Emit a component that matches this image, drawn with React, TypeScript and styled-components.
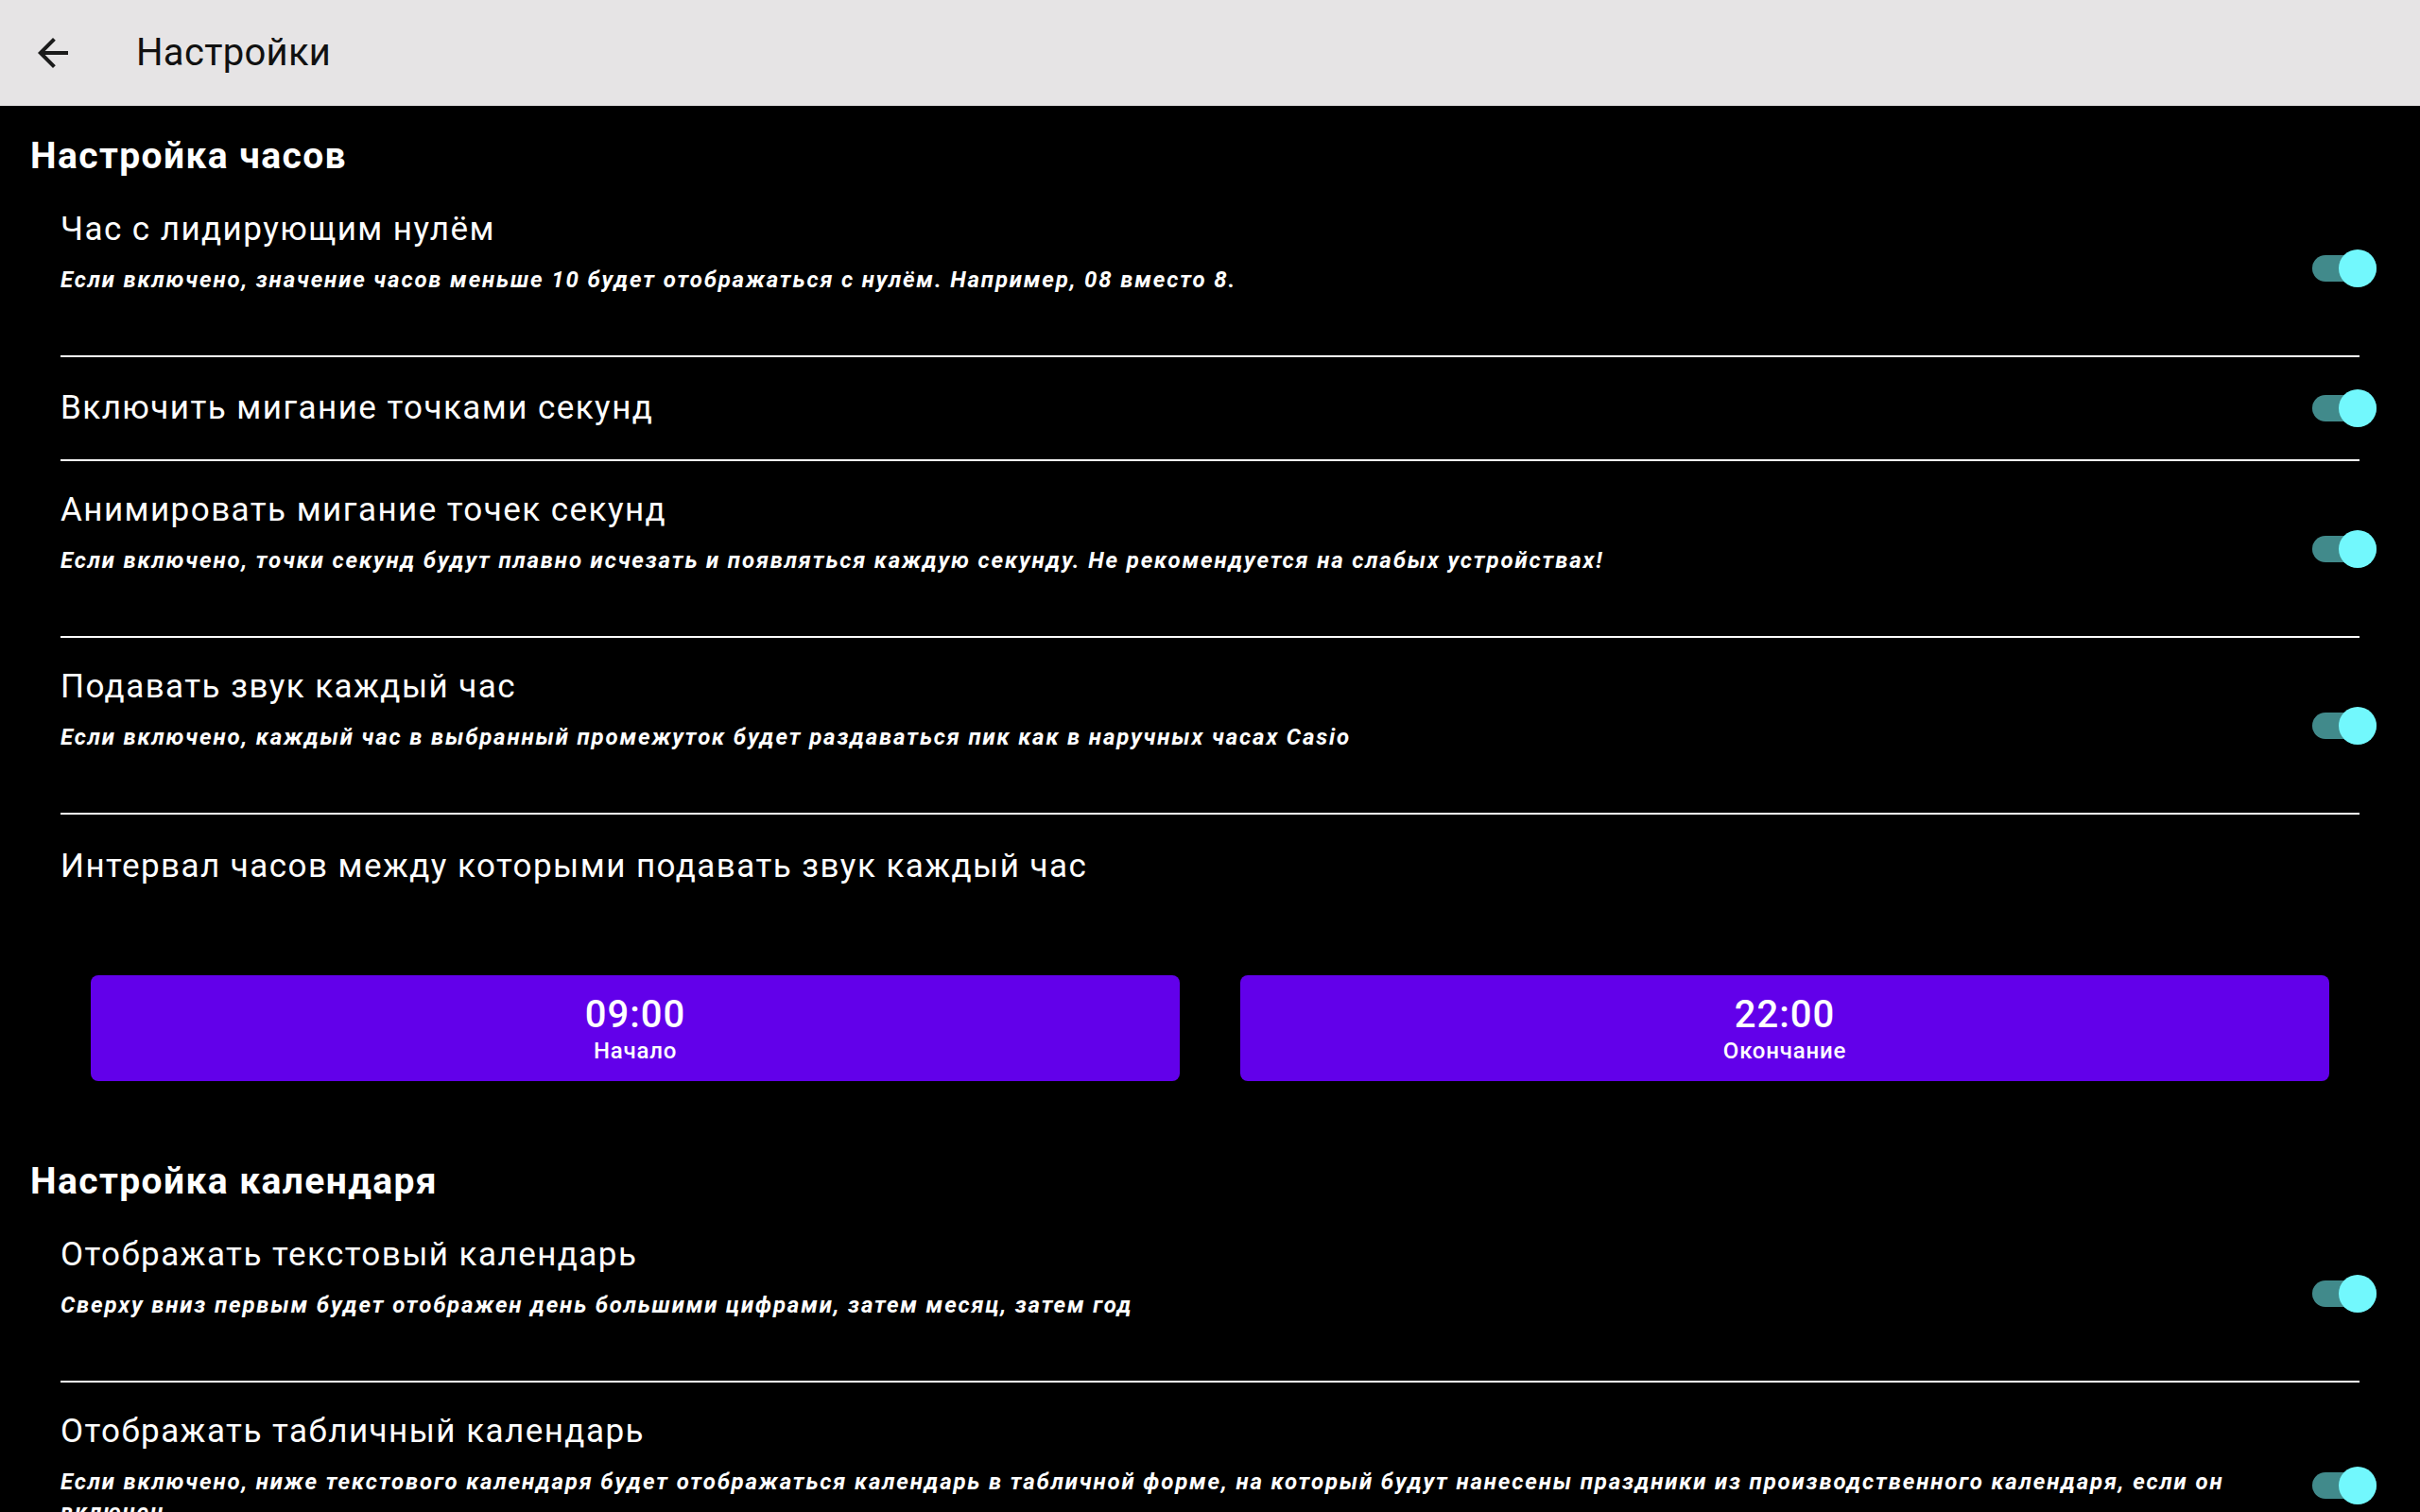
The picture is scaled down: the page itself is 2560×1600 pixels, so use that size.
import React from 'react'
import styled, { createGlobalStyle } from 'styled-components'

const GlobalStyle = createGlobalStyle`
  html, body {
    margin: 0;
    padding: 0;
    background: #000000;
  }
  body {
    font-family: 'Roboto', 'Noto Sans', sans-serif;
    -webkit-font-smoothing: antialiased;
  }
  * {
    box-sizing: border-box;
  }
`

const Screen = styled.div`
  width: 2560px;
  height: 1600px;
  overflow: hidden;
  background: #000000;
  display: flex;
  flex-direction: column;
`

const Toolbar = styled.header`
  height: 112px;
  flex-shrink: 0;
  background: #e6e4e5;
  display: flex;
  align-items: center;
  padding-left: 32px;
  gap: 64px;
`

const BackButton = styled.div`
  width: 48px;
  height: 48px;
  display: flex;
  align-items: center;
  justify-content: center;
  svg {
    width: 48px;
    height: 48px;
    fill: #1b1b1b;
  }
`

const ToolbarTitle = styled.h1`
  margin: 0;
  font-family: 'Roboto', sans-serif;
  font-weight: 400;
  font-size: 40px;
  line-height: 48px;
  color: #111111;
  letter-spacing: 0.3px;
`

const Content = styled.main`
  display: flex;
  flex-direction: column;
`

const SectionTitle = styled.h2<{ $top: number }>`
  margin: ${p => p.$top}px 0 2px;
  padding: 0 32px;
  font-family: 'Roboto', sans-serif;
  font-weight: 700;
  font-size: 39px;
  line-height: 48px;
  color: #ffffff;
  letter-spacing: 1.4px;
`

const Item = styled.div<{ $single?: boolean }>`
  display: flex;
  align-items: center;
  padding: ${p => (p.$single ? '34px 46px 34px 64px' : '32px 46px 32px 64px')};
`

const ItemText = styled.div<{ $single?: boolean }>`
  flex: 1;
  display: flex;
  flex-direction: column;
  gap: 17px;
  padding-right: 60px;
  padding-bottom: ${p => (p.$single ? '0' : '32px')};
`

const ItemTitle = styled.div`
  font-family: 'Roboto', sans-serif;
  font-weight: 400;
  font-size: 35px;
  line-height: 40px;
  color: #ffffff;
  letter-spacing: 1.45px;
`

const ItemSummary = styled.div`
  font-family: 'Roboto', sans-serif;
  font-weight: 700;
  font-style: italic;
  font-size: 24px;
  line-height: 32px;
  color: #ffffff;
  letter-spacing: 1.85px;
`

const Divider = styled.div`
  height: 2px;
  margin: 0 64px;
  background: #ffffff;
`

const SwitchTrack = styled.div<{ $on: boolean }>`
  position: relative;
  width: 68px;
  height: 28px;
  border-radius: 14px;
  flex-shrink: 0;
  background: ${p => (p.$on ? '#418a8b' : '#5b5b5b')};
`

const SwitchThumb = styled.div<{ $on: boolean }>`
  position: absolute;
  top: -6px;
  ${p => (p.$on ? 'right: 0;' : 'left: 0;')}
  width: 40px;
  height: 40px;
  border-radius: 50%;
  background: ${p => (p.$on ? '#72f8fd' : '#ececec')};
`

const IntervalBlock = styled.div`
  padding: 35px 0 0;
`

const IntervalTitle = styled.div`
  padding: 0 64px;
  font-family: 'Roboto', sans-serif;
  font-weight: 400;
  font-size: 35px;
  line-height: 40px;
  color: #ffffff;
  letter-spacing: 1.45px;
`

const ButtonRow = styled.div`
  display: grid;
  grid-template-columns: 1fr 1fr;
  gap: 64px;
  padding: 0 96px;
  margin-top: 95px;
`

const TimeButton = styled.button`
  height: 112px;
  border: none;
  border-radius: 8px;
  background: #6200ea;
  color: #ffffff;
  display: flex;
  flex-direction: column;
  align-items: center;
  justify-content: center;
  padding: 3px 0 0;
  cursor: pointer;
`

const TimeValue = styled.span`
  font-family: 'Roboto', sans-serif;
  font-weight: 500;
  font-size: 40px;
  line-height: 44px;
  letter-spacing: 1px;
`

const TimeLabel = styled.span`
  font-family: 'Roboto', sans-serif;
  font-weight: 500;
  font-size: 24px;
  line-height: 32px;
  letter-spacing: 0.8px;
`

type Setting = { title: string; summary?: string; on: boolean }

const clockSettings: Setting[] = [
  {
    title: 'Час с лидирующим нулём',
    summary: 'Если включено, значение часов меньше 10 будет отображаться с нулём. Например, 08 вместо 8.',
    on: true,
  },
  { title: 'Включить мигание точками секунд', on: true },
  {
    title: 'Анимировать мигание точек секунд',
    summary: 'Если включено, точки секунд будут плавно исчезать и появляться каждую секунду. Не рекомендуется на слабых устройствах!',
    on: true,
  },
  {
    title: 'Подавать звук каждый час',
    summary: 'Если включено, каждый час в выбранный промежуток будет раздаваться пик как в наручных часах Casio',
    on: true,
  },
]

const calendarSettings: Setting[] = [
  {
    title: 'Отображать текстовый календарь',
    summary: 'Сверху вниз первым будет отображен день большими цифрами, затем месяц, затем год',
    on: true,
  },
  {
    title: 'Отображать табличный календарь',
    summary:
      'Если включено, ниже текстового календаря будет отображаться календарь в табличной форме, на который будут нанесены праздники из производственного календаря, если он включен',
    on: true,
  },
]

function Switch({ on }: { on: boolean }) {
  return (
    <SwitchTrack $on={on}>
      <SwitchThumb $on={on} />
    </SwitchTrack>
  )
}

function SettingRow({ item }: { item: Setting }) {
  const single = !item.summary
  return (
    <Item $single={single}>
      <ItemText $single={single}>
        <ItemTitle>{item.title}</ItemTitle>
        {item.summary && <ItemSummary>{item.summary}</ItemSummary>}
      </ItemText>
      <Switch on={item.on} />
    </Item>
  )
}

export default function App() {
  return (
    <Screen>
      <GlobalStyle />
      <Toolbar>
        <BackButton>
          <svg viewBox="0 0 24 24">
            <path d="M20 11H7.83l5.59-5.59L12 4l-8 8 8 8 1.41-1.41L7.83 13H20v-2z" />
          </svg>
        </BackButton>
        <ToolbarTitle>Настройки</ToolbarTitle>
      </Toolbar>
      <Content>
        <SectionTitle $top={29}>Настройка часов</SectionTitle>
        {clockSettings.map(s => (
          <React.Fragment key={s.title}>
            <SettingRow item={s} />
            <Divider />
          </React.Fragment>
        ))}
        <IntervalBlock>
          <IntervalTitle>Интервал часов между которыми подавать звук каждый час</IntervalTitle>
          <ButtonRow>
            <TimeButton>
              <TimeValue>09:00</TimeValue>
              <TimeLabel>Начало</TimeLabel>
            </TimeButton>
            <TimeButton>
              <TimeValue>22:00</TimeValue>
              <TimeLabel>Окончание</TimeLabel>
            </TimeButton>
          </ButtonRow>
        </IntervalBlock>
        <SectionTitle $top={82}>Настройка календаря</SectionTitle>
        {calendarSettings.map((s, i) => (
          <React.Fragment key={s.title}>
            <SettingRow item={s} />
            {i < calendarSettings.length - 1 && <Divider />}
          </React.Fragment>
        ))}
      </Content>
    </Screen>
  )
}
